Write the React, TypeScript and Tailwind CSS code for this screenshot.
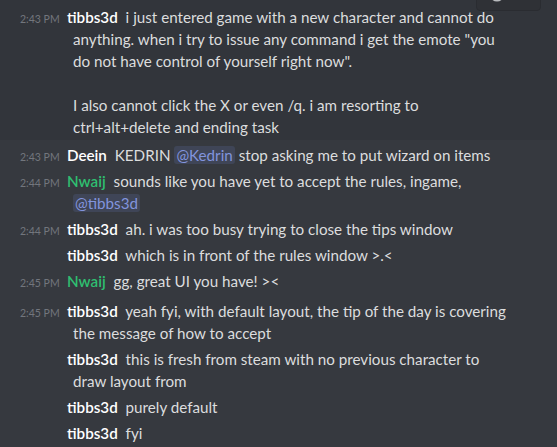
import React from "react";

type Msg = {
  time?: string;
  user: string;
  color?: string;
  body: React.ReactNode;
  className?: string;
};

function Mention({ children }: { children: React.ReactNode }) {
  return (
    <span className="rounded-[3px] bg-[rgba(114,137,218,0.16)] px-[2px] text-[#8294dd]">
      {children}
    </span>
  );
}

const MESSAGES: Msg[] = [
  {
    time: "2:43 PM",
    user: "tibbs3d",
    className: "bg-[#32353b] pt-[6px]",
    body: (
      <>
        i just entered game with a new character and cannot do anything. when i
        try to issue any command i get the emote "you do not have control of
        yourself right now".
        <br />
        <br />I also cannot click the X or even /q. i am resorting to
        ctrl+alt+delete and ending task
      </>
    ),
  },
  {
    time: "2:43 PM",
    user: "Deein",
    className: "mt-[2px]",
    body: (
      <>
        KEDRIN <Mention>@Kedrin</Mention> stop asking me to put wizard on items
      </>
    ),
  },
  {
    time: "2:44 PM",
    user: "Nwaij",
    color: "text-[#2fbf71]",
    body: (
      <>
        sounds like you have yet to accept the rules, ingame,{" "}
        <Mention>@tibbs3d</Mention>
      </>
    ),
  },
  { time: "2:44 PM", user: "tibbs3d", body: "ah. i was too busy trying to close the tips window" },
  { user: "tibbs3d", body: "which is in front of the rules window >.<" },
  { time: "2:45 PM", user: "Nwaij", color: "text-[#2fbf71]", body: "gg, great UI you have! ><" },
  {
    time: "2:45 PM",
    user: "tibbs3d",
    className: "mt-[4px]",
    body: "yeah fyi, with default layout, the tip of the day is covering the message of how to accept",
  },
  { user: "tibbs3d", body: "this is fresh from steam with no previous character to draw layout from" },
  { user: "tibbs3d", body: "purely default" },
  { user: "tibbs3d", body: "fyi" },
];

function Message({ m }: { m: Msg }) {
  return (
    <div
      className={`relative py-[2px] pl-[73px] pr-[42px] indent-[-53px] text-[15.2px] leading-[22px] text-[#dcddde] ${m.className ?? ""}`}
    >
      <span className="inline-block w-[47px] indent-0 text-[10.5px] leading-none text-[#72767d]">
        {m.time ?? ""}
      </span>
      <span className={`mr-[4px] font-semibold ${m.color ?? "text-white"}`}>{m.user}</span>{" "}
      {m.body}
    </div>
  );
}

export default function App() {
  return (
    <div
      className="relative h-[447px] w-[557px] overflow-hidden bg-[#36393f]"
      style={{ fontFamily: "Lato, 'Noto Sans', sans-serif" }}
    >
      <div className="absolute right-[16px] top-[-22px] z-10 flex h-[33px] w-[65px] items-end rounded-[4px] border border-[#2a2c31] bg-[#2f3136] pb-[8px] pl-[12px]">
        <svg width="16" height="16" viewBox="0 0 16 16" className="text-[#b9bbbe]">
          <circle cx="8" cy="8" r="6.5" fill="none" stroke="currentColor" strokeWidth="2" />
        </svg>
      </div>
      {MESSAGES.map((m, i) => (
        <Message key={i} m={m} />
      ))}
    </div>
  );
}
